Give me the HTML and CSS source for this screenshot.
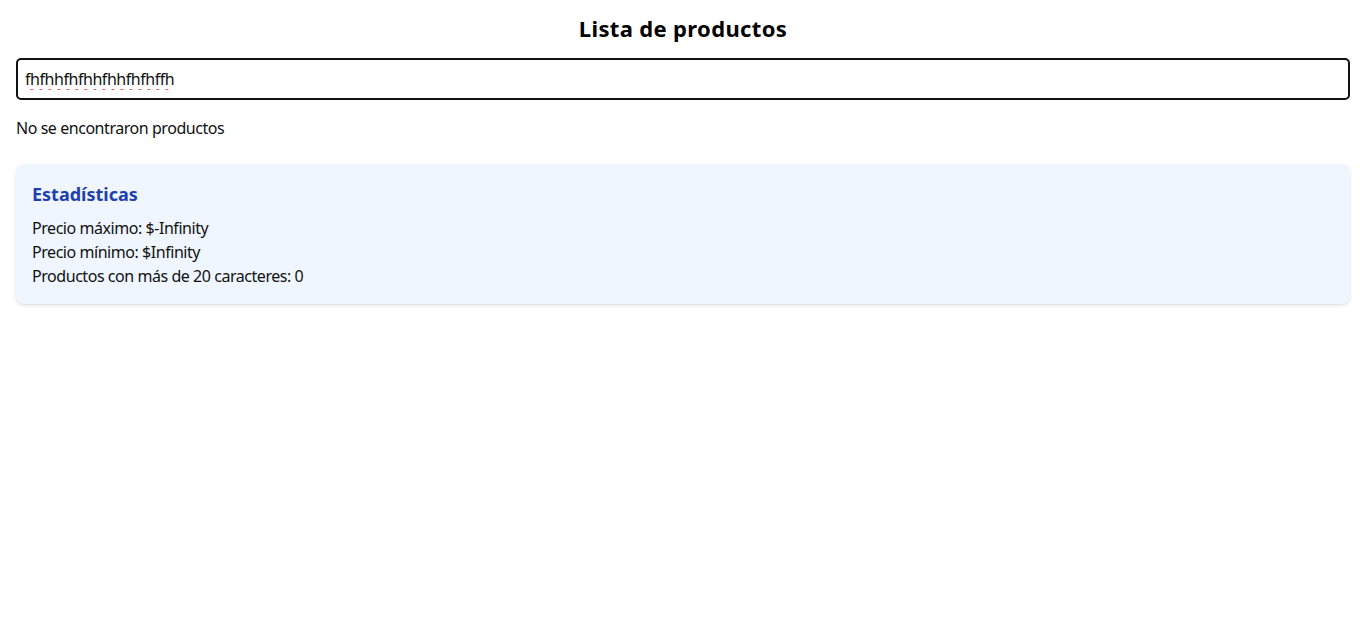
FILE: index.html
```html
<!DOCTYPE html>
<html lang="es">
<head>
<meta charset="utf-8">
<title>Lista de productos</title>
<link rel="stylesheet" href="styles.css">
</head>
<body>
<main class="page">
  <h1 class="title">Lista de productos</h1>
  <input class="search" type="text" value="fhfhhfhfhhfhhfhfhffh">
  <p class="empty">No se encontraron productos</p>
  <section class="stats">
    <h2 class="stats-title">Estadísticas</h2>
    <p class="stat">Precio máximo: $-Infinity</p>
    <p class="stat">Precio mínimo: $Infinity</p>
    <p class="stat">Productos con más de 20 caracteres: 0</p>
  </section>
</main>
</body>
</html>
```
FILE: styles.css
```css
* { box-sizing: border-box; }
html, body { margin: 0; padding: 0; background: #fff; }
body {
  font-family: "Noto Sans", "Open Sans", sans-serif;
  color: #111;
  font-size: 16px;
  line-height: 24px;
  letter-spacing: -0.45px;
}
.page {
  padding: 14px 16px 16px;
  display: flex;
  flex-direction: column;
}
.title {
  margin: 0 0 16px;
  font-size: 22px;
  line-height: 28px;
  font-weight: 700;
  text-align: center;
  color: #000;
  letter-spacing: 0.35px;
}
.search {
  display: block;
  width: 100%;
  height: 42px;
  border: 2px solid #111;
  border-radius: 5px;
  padding: 0 8px 0 7px;
  font: inherit;
  font-size: 16px;
  letter-spacing: -0.45px;
  color: #111;
  outline: none;
  background: #fff;
  text-decoration: underline wavy #f03a3a;
  text-underline-offset: 3px;
}
.empty {
  margin: 16px 0 0;
}
.stats {
  margin-top: 24px;
  background: #eff6ff;
  border-radius: 8px;
  padding: 16px;
  box-shadow: 0 2px 4px rgba(0,0,0,0.08), 0 1px 2px rgba(0,0,0,0.06);
}
.stats-title {
  margin: 0 0 8px;
  font-size: 18px;
  line-height: 28px;
  font-weight: 700;
  color: #1e40af;
  letter-spacing: 0;
}
.stat {
  margin: 0;
}
```
